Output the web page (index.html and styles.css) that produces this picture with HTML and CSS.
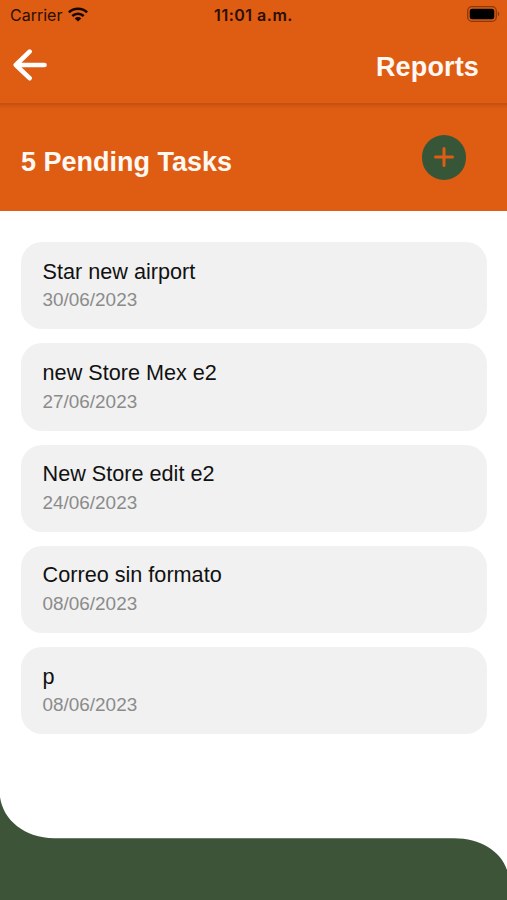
FILE: index.html
```html
<!DOCTYPE html>
<html lang="en">
<head>
<meta charset="utf-8">
<meta name="viewport" content="width=device-width, initial-scale=1">
<title>Reports</title>
<link rel="stylesheet" href="styles.css">
</head>
<body>
<div class="screen">
  <div class="status">
    <div class="carrier">
      <span>Carrier</span>
      <svg class="wifi" viewBox="0 0 20 15" aria-hidden="true">
        <g fill="none" stroke="currentColor" stroke-width="2.6">
          <path d="M.9 5.4C5.9.5 14.1.5 19.1 5.4"/>
          <path d="M4.3 9C7.5 5.9 12.5 5.9 15.7 9"/>
        </g>
        <path d="M6.7 11.4C8.6 9.6 11.4 9.6 13.3 11.4L10 14.6Z" fill="currentColor"/>
      </svg>
    </div>
    <div class="time">11:01 a.m.</div>
    <svg class="battery" viewBox="0 0 33 16" aria-hidden="true">
      <rect x=".7" y=".7" width="28.6" height="14.6" rx="4.3" fill="none" stroke="#000" stroke-opacity=".38" stroke-width="1.3"/>
      <rect x="2.7" y="2.7" width="24.6" height="10.6" rx="2.5"/>
      <path d="M30.9 5.6C32.8 6.5 32.8 9.5 30.9 10.4Z" fill-opacity=".4"/>
    </svg>
  </div>
  <header class="nav">
    <svg class="back" viewBox="0 0 34 32" role="img" aria-label="Back">
      <path d="M16.6 2.6L2.8 16L16.6 29.2M3.4 16H31.5" fill="none" stroke="#fff" stroke-width="4.6" stroke-linecap="round" stroke-linejoin="round"/>
    </svg>
    <h1 class="heading">Reports</h1>
  </header>
  <section class="summary">
    <h2 class="heading">5 Pending Tasks</h2>
    <button class="add" aria-label="Add task">
      <svg viewBox="0 0 20 20" aria-hidden="true"><path d="M10 1.5V18.5M1.5 10H18.5" stroke="#df5c13" stroke-width="3" stroke-linecap="round"/></svg>
    </button>
  </section>
  <main class="tasks">
    <article class="task"><h3>Star new airport</h3><time>30/06/2023</time></article>
    <article class="task"><h3>new Store Mex e2</h3><time>27/06/2023</time></article>
    <article class="task"><h3>New Store edit e2</h3><time>24/06/2023</time></article>
    <article class="task"><h3>Correo sin formato</h3><time>08/06/2023</time></article>
    <article class="task"><h3>p</h3><time>08/06/2023</time></article>
  </main>
  <svg class="footer" viewBox="0 0 507 103" preserveAspectRatio="none" aria-hidden="true">
    <path d="M0 0C3 23 25 41.2 54 41.2H454C480 41.2 501 54 507 73V103H0Z" fill="#3d5438"/>
  </svg>
</div>
</body>
</html>
```
FILE: styles.css
```css
* { box-sizing: border-box; }

body {
  margin: 0;
  background: #fff;
  font-family: "Liberation Sans", Arial, sans-serif;
}

.screen {
  display: flex;
  flex-direction: column;
  height: 900px;
  overflow: hidden;
}

.status {
  display: grid;
  grid-template-columns: 1fr auto 1fr;
  align-items: center;
  height: 28px;
  padding: 2px 7px 0 10px;
  background: #df5c13;
  color: #2a0f03;
  font: 400 16px/20px Inter, sans-serif;
}

.carrier { display: flex; align-items: center; gap: 6px; }
.wifi { width: 20px; height: 15px; margin-top: -2px; color: #180700; }
.time { margin-right: 3px; font-weight: 600; letter-spacing: .5px; }
.battery { justify-self: end; width: 33px; height: 16px; margin-top: -3px; }

.nav {
  display: flex;
  align-items: center;
  justify-content: space-between;
  height: 77px;
  padding: 1px 28px 2px 13px;
  background: #df5c13;
  border-bottom: 2px solid #c75110;
}

.back { width: 34px; height: 32px; }

.heading {
  margin: 0;
  color: #fff8f3;
  font-size: 27px;
  line-height: 32px;
  font-weight: 700;
}

.nav .heading { margin-top: 3px; letter-spacing: .15px; }

.summary {
  display: flex;
  align-items: flex-start;
  justify-content: space-between;
  height: 106px;
  padding: 30px 41px 0 21px;
  background: linear-gradient(#cf5511, #df5c13 4px);
}

.summary .heading { margin-top: 11px; }

.add {
  display: grid;
  place-items: center;
  width: 44.5px;
  height: 44.5px;
  padding: 0;
  border: 0;
  border-radius: 50%;
  background: #365637;
}

.add svg { width: 20px; height: 20px; }

.tasks {
  display: flex;
  flex-direction: column;
  gap: 14px;
  flex: 1;
  padding: 31.3px 20px 0 21px;
}

.task {
  height: 87.2px;
  padding: 16.6px 21.6px 0;
  border-radius: 21px;
  background: #f1f1f1;
}

.task h3 {
  margin: 0;
  color: #111;
  font-size: 21.63px;
  line-height: 26px;
  font-weight: 400;
}

.task time {
  display: block;
  margin-top: 3.5px;
  color: #8b8b8b;
  font-size: 18.9px;
  line-height: 24px;
}

.footer { display: block; width: 100%; height: 103px; }
```
